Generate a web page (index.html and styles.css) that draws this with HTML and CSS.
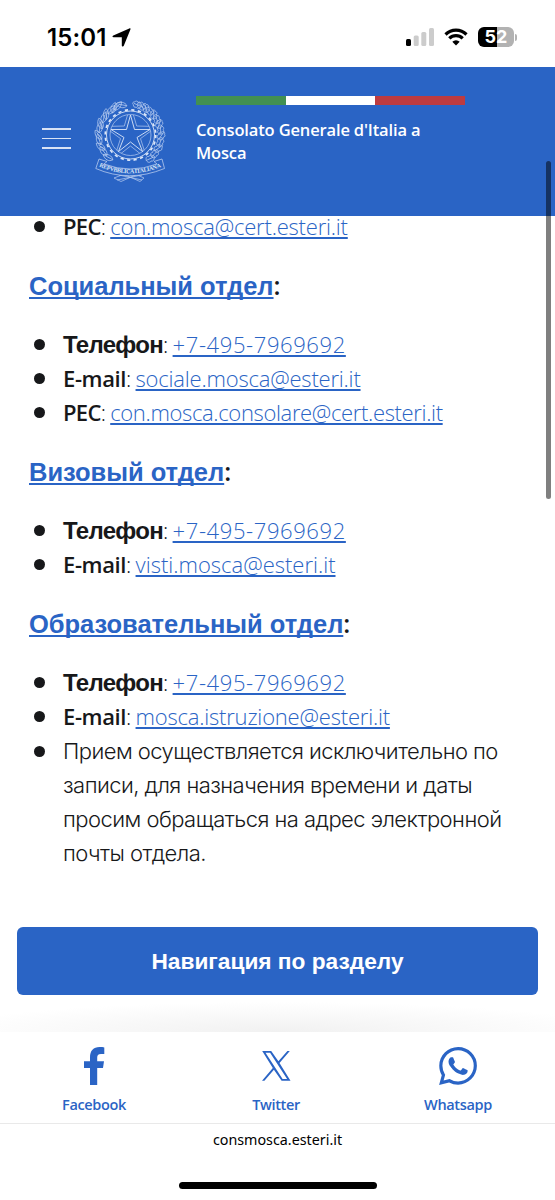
FILE: index.html
```html
<!DOCTYPE html>
<html lang="ru">
<head>
    <meta charset="UTF-8">
    <meta name="viewport" content="width=device-width, initial-scale=1.0">
    <title>Consolato Generale d'Italia a Mosca</title>
    <link rel="stylesheet" href="styles.css">
</head>
<body>
    <div class="status-bar">
        <div class="status-left">
            <span class="time">15:01</span>
            <svg class="location" viewBox="0 0 19 19"><path d="M17.300 .500c.9-.4 1.500.2 1.100 1.100L11.800 17.700c-.4 1.100-2 1-2-.3V9.300L1.600 9.200C.2 9.200.1 7.900 1.300 7.400Z"/></svg>
        </div>
        <div class="status-right">
            <svg class="signal" viewBox="0 0 28 18">
                <rect x="0" y="11" width="5" height="7" rx="1.500"/>
                <rect class="off" x="7.700" y="7.500" width="5" height="10.500" rx="1.500"/>
                <rect class="off" x="15.300" y="4" width="5" height="14" rx="1.500"/>
                <rect class="off" x="23" y="0" width="5" height="18" rx="1.500"/>
            </svg>
            <svg class="wifi" viewBox="0 0 24 18">
                <path d="M1.500 6.500a15 15 0 0 1 21 0M5.300 10.300a9.600 9.600 0 0 1 13.400 0"/>
                <path class="dot" d="M12 17.500 8.300 13.800a5.300 5.300 0 0 1 7.400 0Z"/>
            </svg>
            <div class="battery"><span>5</span><span>2</span></div>
            <i class="battery-cap"></i>
        </div>
    </div>

    <header class="header">
        <button class="menu" aria-label="Menu"><span></span><span></span><span></span></button>
        <svg class="emblem" viewBox="0 0 71 84">
            <defs>
                <g id="leaf"><path d="M35 9.500C31 7 31.500 2 35-1.500 38 2 38.500 7 35 9.500ZV1"/></g>
                <g id="oak"><path d="M35 9c-3-.5-4-2.500-2.400-4-1.600-1.800-.6-3.500.8-3.600C33.500-.6 36.500-.6 36.700 1.400c1.400.2 2.200 2 .8 3.500 1.400 1.500.3 3.800-2.500 4.100V1"/></g>
                <path id="ribbon" d="M4 67.500Q35 81 67 67.500"/>
                <clipPath id="ring"><circle cx="35.500" cy="36" r="20.500"/></clipPath>
            </defs>
            <!-- olive branch -->
            <g class="line">
                <use href="#leaf" transform="rotate(-14 35 36) rotate(-65 35 5)"/>
                <use href="#leaf" transform="rotate(-24 35 36) rotate(65 35 5)"/>
                <use href="#leaf" transform="rotate(-32 35 36) rotate(48 35 5)"/>
                <use href="#leaf" transform="rotate(-38 35 36) rotate(80 35 5)"/>
                <use href="#leaf" transform="rotate(-50 35 36) rotate(48 35 5)"/>
                <use href="#leaf" transform="rotate(-58 35 36) rotate(75 35 5)"/>
                <use href="#leaf" transform="rotate(-70 35 36) rotate(52 35 5)"/>
                <use href="#leaf" transform="rotate(-78 35 36) rotate(85 35 5)"/>
                <use href="#leaf" transform="rotate(-91 35 36) rotate(55 35 5)"/>
                <use href="#leaf" transform="rotate(-100 35 36) rotate(82 35 5)"/>
                <use href="#leaf" transform="rotate(-113 35 36) rotate(60 35 5)"/>
                <use href="#leaf" transform="rotate(-123 35 36) rotate(85 35 5)"/>
                <use href="#leaf" transform="rotate(-137 35 36) rotate(75 35 5)"/>
            </g>
            <!-- oak branch -->
            <g class="line">
                <use href="#oak" transform="rotate(14 35 36) rotate(-80 35 5)"/>
                <use href="#oak" transform="rotate(22 35 36) rotate(-65 35 5)"/>
                <use href="#oak" transform="rotate(31 35 36) rotate(-50 35 5)"/>
                <use href="#oak" transform="rotate(40 35 36) rotate(-85 35 5)"/>
                <use href="#oak" transform="rotate(50 35 36) rotate(-50 35 5)"/>
                <use href="#oak" transform="rotate(60 35 36) rotate(-80 35 5)"/>
                <use href="#oak" transform="rotate(70 35 36) rotate(-50 35 5)"/>
                <use href="#oak" transform="rotate(81 35 36) rotate(-85 35 5)"/>
                <use href="#oak" transform="rotate(92 35 36) rotate(-55 35 5)"/>
                <use href="#oak" transform="rotate(104 35 36) rotate(-85 35 5)"/>
                <use href="#oak" transform="rotate(116 35 36) rotate(-60 35 5)"/>
                <use href="#oak" transform="rotate(128 35 36) rotate(-85 35 5)"/>
                <use href="#oak" transform="rotate(140 35 36) rotate(-75 35 5)"/>
            </g>
            <!-- cogwheel -->
            <circle class="disc" cx="35.500" cy="36" r="25"/>
            <circle class="gear" cx="35.500" cy="36" r="24"/>
            <circle class="teeth" cx="35.500" cy="36" r="25.200"/>
            <circle class="line" cx="35.500" cy="36" r="20.500"/>
            <g clip-path="url(#ring)">
                <path class="line" d="M35.500 6 41.700 27 62 27.500 45.500 39.600 52 60 35.500 47 19 60 25.500 39.600 9 27.500 29.300 27Z"/>
            </g>
            <path class="star" d="M35.500 16 39.500 30.500 55 30.500 42 38.500 47.600 52.600 35.500 43 23.400 52.600 29 38.500 16 30.500 31.500 30.500Z"/>
            <!-- ribbon -->
            <path class="line" d="M26 74 45 82.500 49 79 30 70.500M45 74 26 82.500 19 79 41 70.500M24 76 47 81M47 76 22 81"/>
            <path class="ribbon" d="M4 60 .8 69.500Q34 84 69.500 69.500L67 60 59 62.500 62 65Q35 75 9 65L12 62.500Z"/>
            <text class="motto"><textPath href="#ribbon" textLength="64">REPVBBLICA ITALIANA</textPath></text>
        </svg>
        <div class="brand">
            <div class="flag"><i></i><i></i><i></i></div>
            <div class="title">Consolato Generale d'Italia a<br>Mosca</div>
        </div>
    </header>

    <main class="content">
        <ul>
            <li><strong>PEC</strong>: <a href="#">con.mosca@cert.esteri.it</a></li>
        </ul>
        <h2><a href="#">Социальный отдел</a>:</h2>
        <ul>
            <li><strong class="cyr">Телефон</strong>: <a class="phone" href="#">+7-495-7969692</a></li>
            <li><strong class="email">E-mail</strong>: <a href="#">sociale.mosca@esteri.it</a></li>
            <li><strong>PEC</strong>: <a class="long" href="#">con.mosca.consolare@cert.esteri.it</a></li>
        </ul>
        <h2><a href="#">Визовый отдел</a>:</h2>
        <ul>
            <li><strong class="cyr">Телефон</strong>: <a class="phone" href="#">+7-495-7969692</a></li>
            <li><strong class="email">E-mail</strong>: <a class="short" href="#">visti.mosca@esteri.it</a></li>
        </ul>
        <h2><a href="#">Образовательный отдел</a>:</h2>
        <ul>
            <li><strong class="cyr">Телефон</strong>: <a class="phone" href="#">+7-495-7969692</a></li>
            <li><strong class="email">E-mail</strong>: <a href="#">mosca.istruzione@esteri.it</a></li>
            <li class="note">Прием осуществляется исключительно по<br>записи, для назначения времени и даты<br>просим обращаться на адрес электронной<br>почты отдела.</li>
        </ul>
    </main>

    <button class="nav-btn">Навигация по разделу</button>
    <div class="shade"></div>

    <nav class="share">
        <a href="#">
            <svg viewBox="0 0 38 38"><path d="M15 38V21H9V14.200H15V10.500C15 3.500 18.500 0 24.500 0c2 0 3.800.2 4.800.4V7H26c-3 0-3.800 1.500-3.800 3.800V14.200H29L28 21H22.200V38Z"/></svg>
            <span>Facebook</span>
        </a>
        <a href="#">
            <svg viewBox="0 0 38 38"><path fill-rule="evenodd" d="M5.200 4H14.200L21.400 14.300 30.400 4H32.800L22.500 15.900 33.500 33.700H24.600L16.900 22.700 7.400 33.700H5L15.800 21.100ZM8.500 5.800 25.600 31.900H30.100L13.100 5.800Z"/></svg>
            <span>Twitter</span>
        </a>
        <a href="#">
            <svg viewBox="0 0 24 24"><path d="M17.472 14.382c-.297-.149-1.758-.867-2.030-.967-.273-.099-.471-.148-.670.150-.197.297-.767.966-.940 1.164-.173.199-.347.223-.644.075-.297-.150-1.255-.463-2.390-1.475-.883-.788-1.480-1.761-1.653-2.059-.173-.297-.018-.458.130-.606.134-.133.298-.347.446-.520.149-.174.198-.298.298-.497.099-.198.050-.371-.025-.520-.075-.149-.669-1.612-.916-2.207-.242-.579-.487-.500-.669-.510-.173-.008-.371-.010-.570-.010-.198 0-.520.074-.792.372-.272.297-1.040 1.016-1.040 2.479 0 1.462 1.065 2.875 1.213 3.074.149.198 2.096 3.200 5.077 4.487.709.306 1.262.489 1.694.625.712.227 1.360.195 1.871.118.571-.085 1.758-.719 2.006-1.413.248-.694.248-1.289.173-1.413-.074-.124-.272-.198-.570-.347zM12.050 21.785h-.004a9.870 9.870 0 01-5.031-1.378l-.361-.214-3.741.982.998-3.648-.235-.374a9.860 9.860 0 01-1.510-5.260c.001-5.450 4.436-9.884 9.888-9.884 2.640 0 5.122 1.030 6.988 2.898a9.825 9.825 0 012.893 6.994c-.003 5.450-4.437 9.884-9.885 9.884zM20.463 3.488A11.815 11.815 0 0012.050 0C5.495 0 .160 5.335.157 11.892c0 2.096.547 4.142 1.588 5.945L.057 24l6.305-1.654a11.882 11.882 0 005.683 1.448h.005c6.554 0 11.890-5.335 11.893-11.893a11.821 11.821 0 00-3.480-8.413z"/></svg>
            <span>Whatsapp</span>
        </a>
    </nav>
    <div class="url">consmosca.esteri.it</div>
    <div class="home"></div>
    <div class="scrollbar"></div>
</body>
</html>
```
FILE: styles.css
```css
* { box-sizing: border-box; }
body { font-family: "Open Sans", "Noto Sans", sans-serif; margin: 0; width: 555px; height: 1200px; overflow: hidden; background: #fff; color: #17181a; display: flex; flex-direction: column; }

.status-bar { height: 67px; flex: none; display: flex; justify-content: space-between; padding: 27px 38px 0 47px; color: #000; }
.status-left { display: flex; align-items: flex-start; gap: 6px; }
.time { font: 600 24px/21px Inter, sans-serif; letter-spacing: 0.1px; }
.location { width: 19px; height: 19px; margin-top: 1px; }
.status-right { display: flex; align-items: flex-start; }
.signal { width: 28px; height: 18px; margin: 1px 10px 0 0; }
.signal .off { fill: #ccc; }
.wifi { width: 24px; height: 18px; margin: 1px 10px 0 0; fill: none; stroke: #000; stroke-width: 3.2; }
.wifi .dot { fill: #000; stroke: none; }
.battery { width: 36px; height: 20px; border-radius: 6px; background: linear-gradient(90deg, #000 52%, #b2b2b2 52%); color: #fff; font: 700 18px/20px Inter, sans-serif; display: flex; justify-content: center; }
.battery-cap { width: 2px; height: 7px; margin: 7px 0 0 1px; border-radius: 0 2px 2px 0; background: #b2b2b2; }

.header { position: relative; z-index: 1; height: 149px; flex: none; background: #2a64c5; color: #fff; display: flex; align-items: flex-start; }
.menu { width: 29px; margin: 61px 0 0 42px; padding: 0; border: 0; background: none; display: flex; flex-direction: column; gap: 8px; }
.menu span { height: 1.5px; width: 29px; background: #d8e2f5; }
.emblem { width: 71px; height: 84px; margin: 32px 0 0 24px; overflow: visible; }
.emblem .line { fill: none; stroke: #b9cdf0; stroke-width: 0.7; }
.emblem .disc { fill: #2a64c5; }
.emblem .gear { fill: none; stroke: #dbe6f8; stroke-width: 0.9; }
.emblem .teeth { fill: none; stroke: #dbe6f8; stroke-width: 1.8; stroke-dasharray: 3.2 3.4; }
.emblem .star { fill: #2a64c5; stroke: #dbe6f8; stroke-width: 0.9; }
.emblem .ribbon { fill: #2a64c5; stroke: #c8d8f4; stroke-width: 0.7; }
.motto { font: 700 6px "Liberation Serif", serif; fill: #dbe6f8; }
.brand { margin: 29px 0 0 30px; }
.flag { display: flex; width: 269px; height: 9px; }
.flag i { flex: 1; background: #fff; }
.flag i:first-child { background: #429052; }
.flag i:last-child { background: #bd3b40; }
.title { margin-top: 13px; font-size: 16.5px; font-weight: 600; line-height: 23px; letter-spacing: -0.15px; white-space: nowrap; }

.content { margin-top: -7px; height: 718px; flex: none; padding-left: 29px; font-size: 22px; line-height: 34px; font-weight: 340; letter-spacing: -0.7px; white-space: nowrap; }
.content a { color: #2a64c5; text-decoration: underline; text-decoration-thickness: 1.5px; text-underline-offset: 2px; text-decoration-skip-ink: none; }
ul { list-style: none; margin: 0; padding: 0 0 0 34px; }
li { height: 34px; }
li::before { content: ""; float: left; width: 11px; height: 11px; margin: 12px 0 0 -29px; border-radius: 50%; background: #17181a; }
li a { letter-spacing: -0.2px; }
li .phone { letter-spacing: 0.6px; }
li .long { letter-spacing: -0.35px; }
li .short { letter-spacing: 0; }
strong { font-weight: 600; }
.email { letter-spacing: -0.4px; }
.cyr { font-family: "Liberation Sans", sans-serif; font-weight: 700; font-size: 24px; line-height: 30px; letter-spacing: -0.7px; }
h2 { height: 34px; margin: 25px 0; font: 600 25.5px/34px "Open Sans", sans-serif; letter-spacing: -1px; }
h2 a { font: 700 25.5px/30px "Liberation Sans", sans-serif; letter-spacing: -0.03px; }
li.note { height: auto; padding-top: 1px; font-family: Inter, sans-serif; font-weight: 300; letter-spacing: -0.55px; }

.nav-btn { width: 521px; height: 68px; flex: none; margin: 0 17px; padding: 1px 0 0; border: 0; border-radius: 6px; background: #2a64c5; color: #fff; font: 700 22.7px "Liberation Sans", sans-serif; }
.shade { height: 37px; flex: none; background: radial-gradient(ellipse 340px 30px at 50% 100%, #f1f1f1, #fff); }

.share { height: 92px; flex: none; border-bottom: 1px solid #e9e9e9; display: flex; justify-content: space-between; padding: 15px 51px 0 48px; }
.share a { width: 92px; display: flex; flex-direction: column; align-items: center; color: #2a64c5; font-size: 14.5px; font-weight: 600; line-height: 20px; letter-spacing: -0.35px; text-decoration: none; }
.share svg { width: 38px; height: 38px; margin-bottom: 10px; fill: #2a64c5; }
.url { margin-top: 6px; text-align: center; color: #000; font: 14.3px/20px "Noto Sans", sans-serif; }
.home { width: 198px; height: 7px; margin: 32px auto 0 179px; border-radius: 4px; background: #000; }
.scrollbar { position: absolute; z-index: 2; left: 546px; top: 161px; width: 5px; height: 338px; border-radius: 3px; background: rgba(0, 0, 0, 0.5); }
```
